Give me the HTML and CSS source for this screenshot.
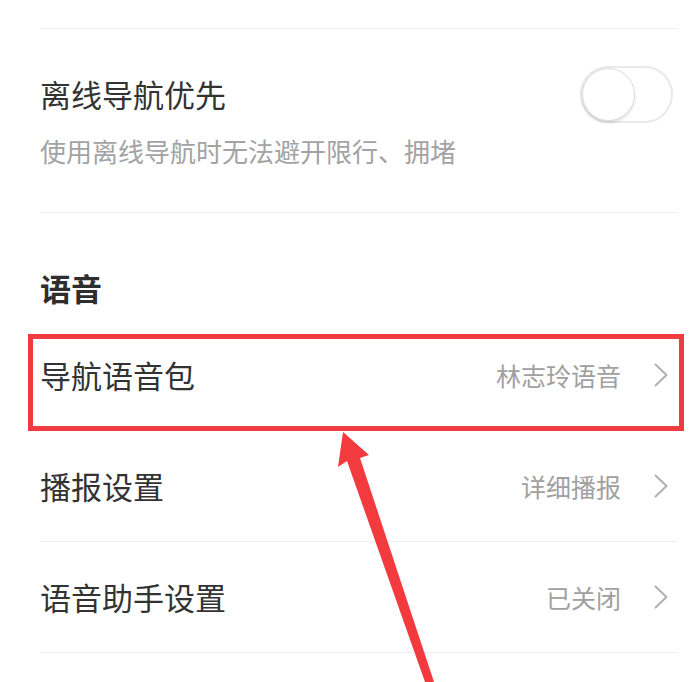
FILE: index.html
```html
<!DOCTYPE html>
<html lang="zh-CN">
<head>
<meta charset="utf-8">
<title>导航设置</title>
<link rel="stylesheet" href="styles.css">
</head>
<body>
<div class="page">
  <div class="list">
    <div class="top-gap"></div>
    <div class="switch-row">
      <div class="switch-line">
        <span class="label">离线导航优先</span>
        <span class="toggle"><span class="knob"></span></span>
      </div>
      <div class="desc">使用离线导航时无法避开限行、拥堵</div>
    </div>
    <div class="section-head">语音</div>
    <div class="row">
      <span class="label">导航语音包</span>
      <span class="value">林志玲语音</span>
      <svg class="chev" viewBox="0 0 14 24" width="14" height="24"><polyline points="1.5,1.5 12.5,12 1.5,22.5"/></svg>
    </div>
    <div class="row">
      <span class="label">播报设置</span>
      <span class="value">详细播报</span>
      <svg class="chev" viewBox="0 0 14 24" width="14" height="24"><polyline points="1.5,1.5 12.5,12 1.5,22.5"/></svg>
    </div>
    <div class="row">
      <span class="label">语音助手设置</span>
      <span class="value">已关闭</span>
      <svg class="chev" viewBox="0 0 14 24" width="14" height="24"><polyline points="1.5,1.5 12.5,12 1.5,22.5"/></svg>
    </div>
  </div>
  <div class="highlight"></div>
  <svg class="arrow" viewBox="0 0 691 682" width="691" height="682">
    <polygon points="343,432 369,455 360,458 434,682 425,682 347,461 338,467"/>
  </svg>
</div>
</body>
</html>
```
FILE: styles.css
```css
html, body {
  margin: 0;
  padding: 0;
  background: #ffffff;
}
body {
  font-family: "Noto Sans CJK SC", "Noto Sans", sans-serif;
  color: #333333;
  overflow: hidden;
}
.page {
  position: relative;
  width: 691px;
  height: 682px;
  overflow: hidden;
}
.list {
  padding: 0 14px 0 40px;
}
.top-gap {
  height: 28px;
  border-bottom: 1px solid #efefef;
}
.switch-row {
  padding: 47px 0 46px;
  border-bottom: 1px solid #efefef;
}
.switch-line {
  display: flex;
  justify-content: space-between;
  align-items: center;
  height: 36px;
}
.label {
  font-size: 31px;
  line-height: 36px;
  color: #333333;
}
.desc {
  margin-top: 24px;
  font-size: 26px;
  line-height: 30px;
  color: #a3a3a3;
}
.toggle {
  box-sizing: border-box;
  display: flex;
  align-items: center;
  width: 93px;
  height: 57px;
  margin-right: 4px;
  border: 2px solid #e9e9e9;
  border-radius: 29px;
  background: #ffffff;
}
.knob {
  box-sizing: border-box;
  width: 53px;
  height: 53px;
  border-radius: 50%;
  border: 1.5px solid #dcdcdc;
  background: #ffffff;
  box-shadow: 0 2px 3px rgba(0, 0, 0, 0.12);
}
.section-head {
  padding: 57px 0 14px;
  font-size: 31px;
  line-height: 36px;
  font-weight: 700;
  color: #2e2e2e;
}
.row {
  box-sizing: border-box;
  display: flex;
  align-items: center;
  height: 111px;
  padding-right: 9px;
  border-bottom: 1px solid #efefef;
}
.row .label {
  flex: 1;
}
.value {
  font-size: 25px;
  line-height: 30px;
  color: #a0a0a0;
  margin-right: 33px;
}
.chev {
  display: block;
  fill: none;
  stroke: #b0b0b0;
  stroke-width: 2;
  stroke-linecap: round;
  stroke-linejoin: round;
}
.highlight {
  position: absolute;
  left: 28px;
  top: 334px;
  width: 656px;
  height: 97px;
  box-sizing: border-box;
  border: 5px solid #ef3b41;
}
.arrow {
  position: absolute;
  left: 0;
  top: 0;
  pointer-events: none;
}
.arrow polygon {
  fill: #f23a3f;
}
```
